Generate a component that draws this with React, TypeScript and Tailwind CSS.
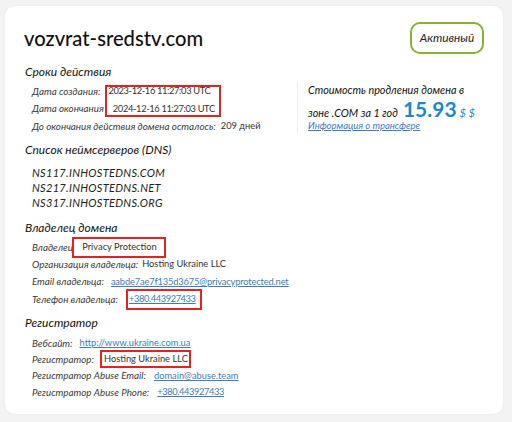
import React from "react";

const label = "italic text-[9.8px] text-[#3a3a3a] whitespace-nowrap";
const value = "text-[9.3px] text-[#333] not-italic whitespace-nowrap";
const link = "text-[9.3px] text-[#3b7cc4] underline not-italic whitespace-nowrap";
const boxed = "border-2 border-[#e32222]";
const heading = "italic text-[12px] text-[#111] leading-[18px]";

function Row({ name, children, h = "h-[17.5px]" }: { name: string; children: React.ReactNode; h?: string }) {
  return (
    <div className={`flex items-center ${h}`}>
      <span className={label}>{name}</span>
      {children}
    </div>
  );
}

export default function App() {
  return (
    <div className="w-[512px] h-[422px] bg-[#f3f3f3] pt-[6px] pl-[5px] font-['Lato',sans-serif]">
      <div className="bg-white rounded-[10px] shadow-[0_0_3px_rgba(0,0,0,0.05)] w-[498px] h-[408px] pl-[20px] pr-[19px] pt-[16px]">
        {/* Header */}
        <div className="flex items-center justify-between h-[32px]">
          <h1 className="text-[20.2px] font-medium text-[#111] leading-[24px] -ml-[1px]">vozvrat-sredstv.com</h1>
          <span className="border-2 border-[#86b331] rounded-[10px] w-[74px] h-[32px] flex items-center justify-center italic text-[11.8px] text-[#222]">
            Активный
          </span>
        </div>

        {/* Сроки действия */}
        <div className="flex mt-[9px]">
          <div className="w-[272px]">
            <h2 className={heading}>Сроки действия</h2>
            <div className="pl-[7px] mt-[1.5px] relative">
              <Row name="Дата создания:">
                <span className={`${value} ml-[8px] tracking-[-0.35px]`}>2023-12-16 11:27:03 UTC</span>
              </Row>
              <Row name="Дата окончания">
                <span className={`${value} ml-[9px] tracking-[-0.35px]`}>2024-12-16 11:27:03 UTC</span>
              </Row>
              {/* red frame round both dates */}
              <div className={`absolute left-[80px] top-[2.5px] w-[116px] h-[32px] ${boxed}`} />
              <Row name="До окончания действия домена осталось:">
                <span className={`${value} ml-[5px]`}>209 дней</span>
              </Row>
            </div>
          </div>
          <div className="border-l border-[#f0f0f0] pl-[10px] mt-[18px] h-[52px] pt-[2px]">
            <div className="italic text-[10.8px] text-[#111] leading-[14px]">Стоимость продления домена в</div>
            <div className="flex items-baseline italic text-[10.8px] text-[#111] h-[23px]">
              зоне .COM за 1 год
              <span className="not-italic font-bold text-[21px] text-[#1b89cc] ml-[5px] leading-[23px]">15.93</span>
              <span className="text-[11px] text-[#1b89cc] ml-[3px]">$ $</span>
            </div>
            <a className="italic text-[9.5px] text-[#3b7cc4] underline block leading-[12px]">Информация о трансфере</a>
          </div>
        </div>

        {/* DNS */}
        <h2 className={`${heading} text-[12.4px] mt-[6px]`}>Список неймсерверов (DNS)</h2>
        <div className="pl-[7px] mt-[5.5px] italic text-[11px] tracking-[0.3px] text-[#222] leading-[15px]">
          <div>NS117.INHOSTEDNS.COM</div>
          <div>NS217.INHOSTEDNS.NET</div>
          <div>NS317.INHOSTEDNS.ORG</div>
        </div>

        {/* Владелец */}
        <h2 className={`${heading} mt-[9.5px]`}>Владелец домена</h2>
        <div className="pl-[7px] mt-[1.5px]">
          <Row name="Владелец" h="h-[17.3px]">
            <span className={`${value} ${boxed} -ml-[1px] pl-[8px] pr-[7px] h-[21px] flex items-center`}>Privacy Protection</span>
          </Row>
          <Row name="Организация владельца:" h="h-[17.3px]">
            <span className={`${value} ml-[4px]`}>Hosting Ukraine LLC</span>
          </Row>
          <Row name="Email владельца:" h="h-[17.3px]">
            <a className={`${link} ml-[7px] tracking-[-0.15px]`}>aabde7ae7f135d3675@privacyprotected.net</a>
          </Row>
          <Row name="Телефон владельца:" h="h-[17.3px]">
            <span className={`${boxed} ml-[8px] pl-[1px] pr-[4px] h-[21px] flex items-center`}>
              <a className={`${link} tracking-[-0.4px]`}>+380.443927433</a>
            </span>
          </Row>
        </div>

        {/* Регистратор */}
        <h2 className={`${heading} mt-[6.3px]`}>Регистратор</h2>
        <div className="pl-[7px] mt-[2.8px]">
          <Row name="Вебсайт:" h="h-[16.4px]">
            <a className={`${link} ml-[7px]`}>http://www.ukraine.com.ua</a>
          </Row>
          <Row name="Регистратор:" h="h-[16.4px]">
            <span className={`${value} ${boxed} ml-[6px] pl-[2px] pr-[1px] h-[18px] flex items-center`}>Hosting Ukraine LLC</span>
          </Row>
          <Row name="Регистратор Abuse Email:" h="h-[16.4px]">
            <a className={`${link} ml-[8px]`}>domain@abuse.team</a>
          </Row>
          <Row name="Регистратор Abuse Phone:" h="h-[16.4px]">
            <a className={`${link} ml-[8px] tracking-[-0.4px]`}>+380.443927433</a>
          </Row>
        </div>
      </div>
    </div>
  );
}
